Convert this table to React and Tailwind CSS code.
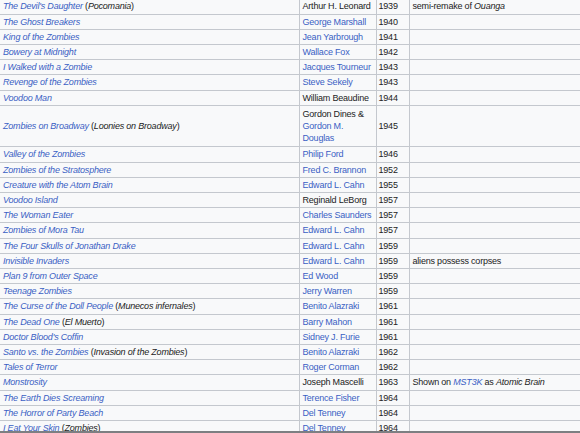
import React from 'react';

// link = blue wiki link, plain = dark text
const films = [
	{ title: 'The Devil\'s Daughter', alt: 'Pocomania', director: [['Arthur H. Leonard', false]], year: 1939, notes: 'ouanga' },
	{ title: 'The Ghost Breakers', director: [['George Marshall', true]], year: 1940 },
	{ title: 'King of the Zombies', director: [['Jean Yarbrough', true]], year: 1941 },
	{ title: 'Bowery at Midnight', director: [['Wallace Fox', true]], year: 1942 },
	{ title: 'I Walked with a Zombie', director: [['Jacques Tourneur', true]], year: 1943 },
	{ title: 'Revenge of the Zombies', director: [['Steve Sekely', true]], year: 1943 },
	{ title: 'Voodoo Man', director: [['William Beaudine', false]], year: 1944 },
	{ title: 'Zombies on Broadway', alt: 'Loonies on Broadway', director: [['Gordon Dines &', false], ['Gordon M.', true], ['Douglas', true]], year: 1945 },
	{ title: 'Valley of the Zombies', director: [['Philip Ford', true]], year: 1946 },
	{ title: 'Zombies of the Stratosphere', director: [['Fred C. Brannon', true]], year: 1952 },
	{ title: 'Creature with the Atom Brain', director: [['Edward L. Cahn', true]], year: 1955 },
	{ title: 'Voodoo Island', director: [['Reginald LeBorg', false]], year: 1957 },
	{ title: 'The Woman Eater', director: [['Charles Saunders', true]], year: 1957 },
	{ title: 'Zombies of Mora Tau', director: [['Edward L. Cahn', true]], year: 1957 },
	{ title: 'The Four Skulls of Jonathan Drake', director: [['Edward L. Cahn', true]], year: 1959 },
	{ title: 'Invisible Invaders', director: [['Edward L. Cahn', true]], year: 1959, notes: 'aliens' },
	{ title: 'Plan 9 from Outer Space', director: [['Ed Wood', true]], year: 1959 },
	{ title: 'Teenage Zombies', director: [['Jerry Warren', true]], year: 1959 },
	{ title: 'The Curse of the Doll People', alt: 'Munecos infernales', director: [['Benito Alazraki', true]], year: 1961 },
	{ title: 'The Dead One', alt: 'El Muerto', director: [['Barry Mahon', true]], year: 1961 },
	{ title: 'Doctor Blood\'s Coffin', director: [['Sidney J. Furie', true]], year: 1961 },
	{ title: 'Santo vs. the Zombies', alt: 'Invasion of the Zombies', director: [['Benito Alazraki', true]], year: 1962 },
	{ title: 'Tales of Terror', director: [['Roger Corman', true]], year: 1962 },
	{ title: 'Monstrosity', director: [['Joseph Mascelli', false]], year: 1963, notes: 'mst3k' },
	{ title: 'The Earth Dies Screaming', director: [['Terence Fisher', true]], year: 1964 },
	{ title: 'The Horror of Party Beach', director: [['Del Tenney', true]], year: 1964 },
	{ title: 'I Eat Your Skin', alt: 'Zombies', director: [['Del Tenney', true]], year: 1964 },
];

const Notes = ({ kind }) => {
	if (kind === 'ouanga') return <>semi-remake of <i>Ouanga</i></>;
	if (kind === 'aliens') return <>aliens possess corpses</>;
	if (kind === 'mst3k') return <>Shown on <i className="text-[#3a5fc4]">MST3K</i> as <i>Atomic Brain</i></>;
	return null;
};

export default function App() {
	return (
		<div className="h-[433px] w-[580px] overflow-hidden bg-[#f8f9fa] border-b-2 border-[#7d7f82]">
			<table
				className="-mt-[1.6px] w-[640px] table-fixed border-collapse whitespace-nowrap text-[9px] leading-[12.2px] tracking-[-0.2px] text-[#222222]"
				style={{ fontFamily: '"Liberation Sans", Arial, sans-serif' }}>
				<colgroup>
					<col className="w-[299px]" />
					<col className="w-[77px]" />
					<col className="w-[33px]" />
					<col />
				</colgroup>
				<tbody>
					{films.map((f, i) => {
						const pad = f.director.length > 1 ? 'py-[2px]' : 'py-px';
						return (
							<tr key={i}>
								<td className={`border border-l-0 border-[#c4c8ce] px-[3px] align-middle ${pad}`}>
									<i className="text-[#3a5fc4]">{f.title}</i>
									{f.alt && <> (<i>{f.alt}</i>)</>}
								</td>
								<td className={`border border-[#c4c8ce] px-[3px] align-middle ${pad}`}>
									{f.director.map(([name, link], j) => (
										<div key={j} className={link ? 'text-[#3a5fc4]' : ''}>{name}</div>
									))}
								</td>
								<td className={`border border-[#c4c8ce] px-[2px] align-middle ${pad}`}>{f.year}</td>
								<td className={`border border-[#c4c8ce] px-[3px] align-middle ${pad}`}>
									<Notes kind={f.notes} />
								</td>
							</tr>
						);
					})}
				</tbody>
			</table>
		</div>
	);
}
